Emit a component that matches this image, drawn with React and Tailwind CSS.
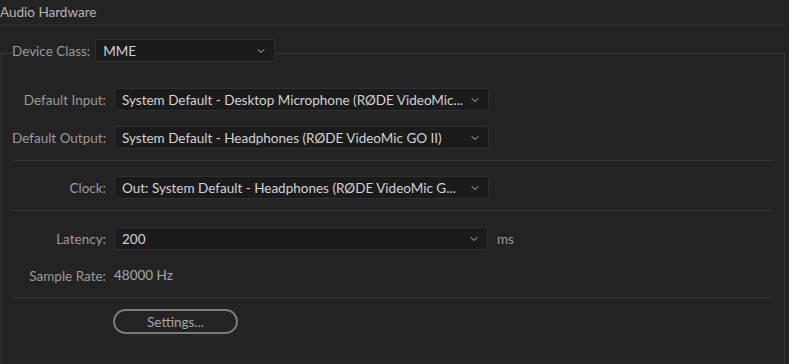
import { ChevronDown } from "lucide-react";

function Select({ value, width }) {
  return (
    <div
      className={`flex h-[23px] items-center justify-between rounded-[2px] border border-[#2f2f2f] bg-[#1b1b1b] pl-[7px] pr-[7px] ${width}`}
    >
      <span className="whitespace-nowrap leading-[18px] text-[#d2d2d2]">{value}</span>
      <ChevronDown size={12} strokeWidth={2} className="ml-1 shrink-0 text-[#bdbdbd]" />
    </div>
  );
}

function Row({ label, children, className = "" }) {
  return (
    <div className={`flex items-center ${className}`}>
      <div className="w-[94px] shrink-0 whitespace-nowrap text-right leading-[18px] text-[#9a9a9a]">{label}</div>
      <div className="ml-[8px] flex items-center">{children}</div>
    </div>
  );
}

function Divider({ className = "" }) {
  return <div className={`h-px bg-[#363636] ${className}`} />;
}

export default function App() {
  return (
    <div className="h-[364px] w-[789px] overflow-hidden bg-[#232323] font-['Lato',sans-serif] text-[13.5px] leading-none">
      <div className="flex h-[24px] items-center leading-[18px] text-[#b4b4b4]">Audio Hardware</div>
      <div className="mr-[4px] h-[2px] bg-[#2c2c2c]" />

      <fieldset className="ml-[1px] mr-[4px] mt-[13px] h-[400px] border border-[#363636] pl-[10px] pr-[11px]">
        <legend className="flex items-center pb-[6px]">
          <span className="leading-[18px] text-[#9a9a9a]">Device Class:</span>
          <div className="ml-[5px]">
            <Select value="MME" width="w-[180px]" />
          </div>
        </legend>

        <Row label="Default Input:" className="mt-[20px]">
          <Select value="System Default - Desktop Microphone (RØDE VideoMic..." width="w-[375px]" />
        </Row>
        <Row label="Default Output:" className="mt-[15px]">
          <Select value="System Default - Headphones (RØDE VideoMic GO II)" width="w-[375px]" />
        </Row>

        <Divider className="mt-[11px]" />

        <Row label="Clock:" className="mt-[15px]">
          <Select value="Out: System Default - Headphones (RØDE VideoMic G..." width="w-[375px]" />
        </Row>

        <Divider className="mt-[11px]" />

        <Row label="Latency:" className="mt-[16px]">
          <Select value="200" width="w-[374px]" />
          <span className="ml-[9px] leading-[18px] text-[#9a9a9a]">ms</span>
        </Row>

        <Row label="Sample Rate:" className="mt-[17px] h-[18px]">
          <span className="text-[#a8a8a8]">48000 Hz</span>
        </Row>

        <Divider className="mt-[12px]" />

        <div className="mt-[11px] pl-[101px]">
          <button className="flex h-[25px] w-[125px] items-center justify-center rounded-full border-2 border-[#7c7c7c] leading-[18px] text-[#a6a6a6]">
            Settings...
          </button>
        </div>
      </fieldset>
    </div>
  );
}
